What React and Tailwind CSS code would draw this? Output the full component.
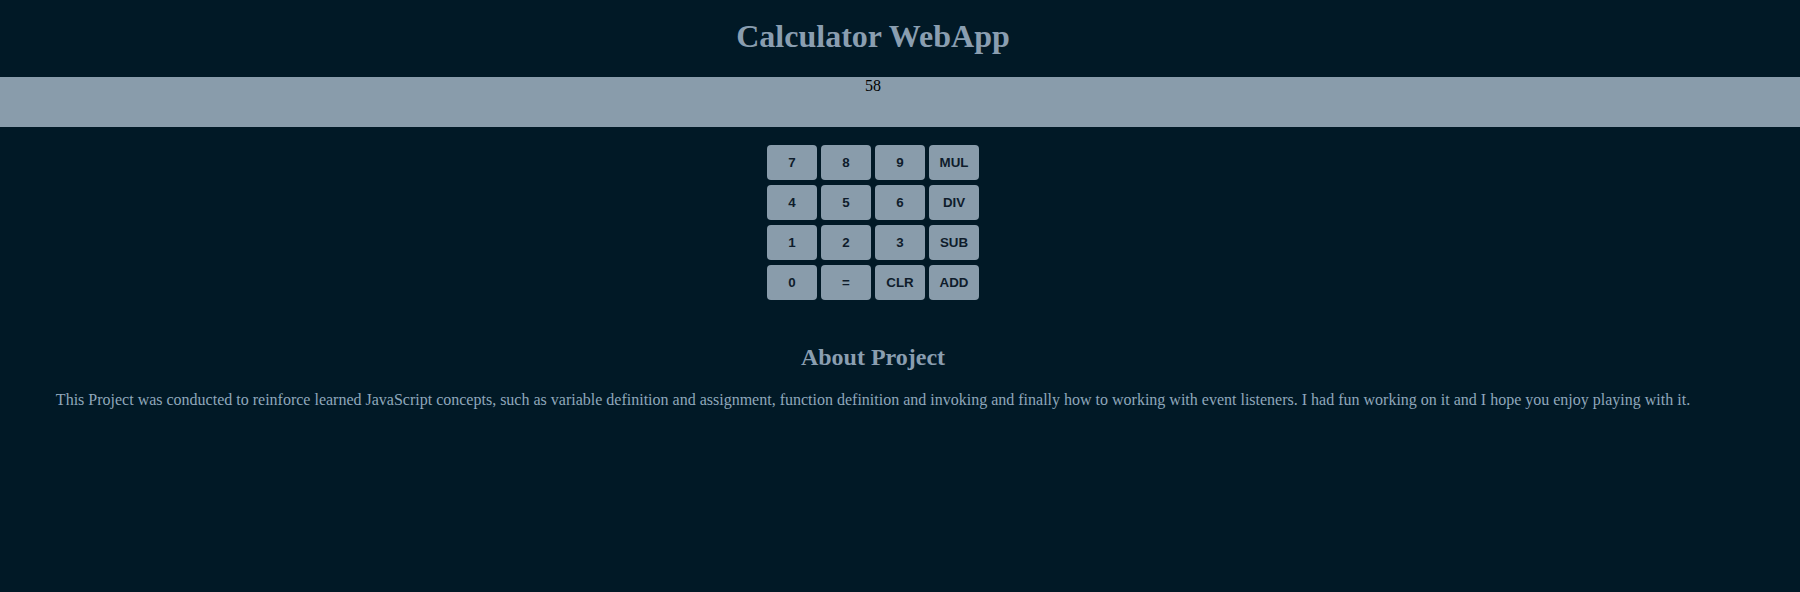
import React, { useState } from 'react';

const keys = ['7', '8', '9', 'MUL', '4', '5', '6', 'DIV', '1', '2', '3', 'SUB', '0', '=', 'CLR', 'ADD'];

const App = () => {
    const [display] = useState('58');

    return (
        <div className="min-h-[592px] w-full bg-[#011926] font-['Liberation_Serif',serif]">
            {/* title */}
            <div className="w-[1746px] pt-[18px] mb-[23px] text-center">
                <h1 className="h-[36px] leading-[36px] text-[32px] font-bold text-[#8a9eb0]">Calculator WebApp</h1>
            </div>

            {/* display */}
            <div className="w-full h-[50px] bg-[#899cab]">
                <div className="w-[1746px] text-center text-[16px] leading-[18px] text-black">{display}</div>
            </div>

            {/* keypad */}
            <div className="w-[1746px] flex justify-center pt-[18px]">
                <div className="grid grid-cols-[repeat(4,50px)] gap-x-[4px] gap-y-[5px]">
                    {keys.map((k) => (
                        <button
                            key={k}
                            className="w-[50px] h-[35px] rounded-[4px] bg-[#899cab] text-[13.33px] font-bold text-[#0f1c2b] font-['Liberation_Sans',Arial,sans-serif]"
                        >
                            {k}
                        </button>
                    ))}
                </div>
            </div>

            {/* about */}
            <div className="w-[1746px] text-center pt-[43px]">
                <h2 className="h-[28px] leading-[28px] text-[24px] font-bold text-[#8a9eb0]">About Project</h2>
                <p className="mt-[20px] text-[16px] leading-[18px] text-[#8fa7bb]">
                    This Project was conducted to reinforce learned JavaScript concepts, such as variable definition and assignment, function definition and invoking and finally how to working with event listeners. I had fun working on it and I hope you enjoy playing with it.
                </p>
            </div>
        </div>
    );
};

export default App;
